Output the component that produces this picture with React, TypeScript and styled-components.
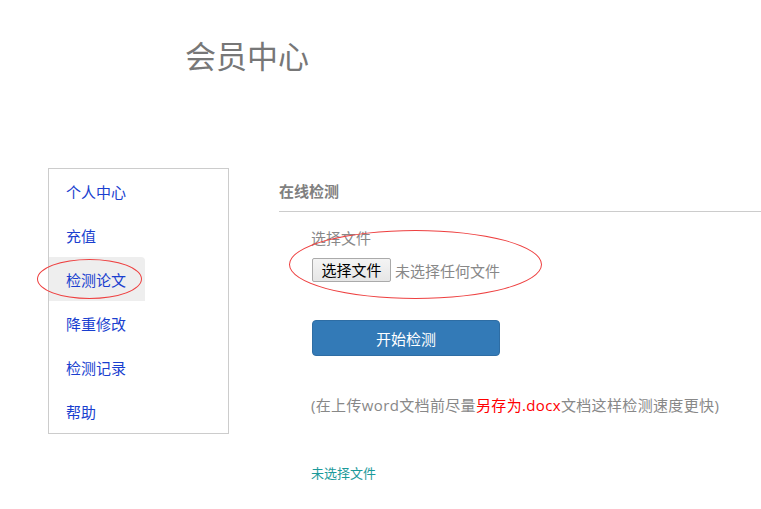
import styled, { createGlobalStyle } from 'styled-components';

const GlobalStyle = createGlobalStyle`
  html, body {
    margin: 0;
    padding: 0;
    background: #fff;
    overflow: hidden;
  }
  body {
    font-family: 'Open Sans', 'Noto Sans CJK SC', sans-serif;
  }
`;

const Page = styled.div`
  width: 761px;
  height: 509px;
  overflow: hidden;
`;
const Title = styled.h1`
  margin: 0;
  padding: 36px 0 0 185px;
  font-size: 31px;
  line-height: 40px;
  font-weight: normal;
  color: #777;
`;
const Main = styled.div`
  display: flex;
  margin-top: 92px;
  padding-left: 48px;
  gap: 50px;
`;
const Sidebar = styled.ul`
  list-style: none;
  margin: 0;
  padding: 0;
  width: 179px;
  height: 264px;
  border: 1px solid #ccc;
  flex-shrink: 0;
`;
const NavItem = styled.li<{ $active?: boolean }>`
  position: relative;
  height: 44px;
  width: ${(p) => (p.$active ? '96px' : 'auto')};
  display: flex;
  align-items: center;
  padding-left: 17px;
  box-sizing: border-box;
  font-size: 15px;
  color: #1a3fcf;
  background: ${(p) => (p.$active ? '#eee' : 'transparent')};
  border-top-right-radius: ${(p) => (p.$active ? '4px' : '0')};
`;
const Ring = styled.span<{ $w: number; $h: number; $l: number; $t: number }>`
  position: absolute;
  left: ${(p) => p.$l}px;
  top: ${(p) => p.$t}px;
  width: ${(p) => p.$w}px;
  height: ${(p) => p.$h}px;
  border: 1px solid #ee4040;
  border-radius: 50%;
  box-sizing: border-box;
  pointer-events: none;
`;
const Content = styled.div`
  flex: 1;
  padding-top: 13px;
`;
const Heading = styled.div`
  font-size: 15px;
  line-height: 20px;
  font-weight: bold;
  color: #808080;
  padding-bottom: 10px;
  border-bottom: 1px solid #ccc;
`;
const Form = styled.div`
  padding-left: 32px;
  display: flex;
  flex-direction: column;
  align-items: flex-start;
`;
const Label = styled.div`
  margin-top: 16px;
  font-size: 15px;
  line-height: 20px;
  color: #888;
`;
const FileRow = styled.div`
  position: relative;
  margin-top: 10px;
  display: flex;
  align-items: center;
  gap: 4px;
  height: 24px;
`;
const FileButton = styled.button`
  width: 79px;
  height: 24px;
  margin-left: 1px;
  padding: 0;
  font-family: inherit;
  font-size: 15px;
  line-height: 20px;
  color: #000;
  background: linear-gradient(#f4f4f4, #e6e6e6);
  border: 1px solid #aaa;
  border-radius: 2px;
`;
const FileText = styled.span`
  font-size: 15px;
  color: #888;
`;
const StartButton = styled.button`
  margin-top: 38px;
  margin-left: 1px;
  width: 188px;
  height: 36px;
  font-family: inherit;
  font-size: 15px;
  color: #fff;
  background: #337ab7;
  border: 1px solid #2e6da4;
  border-radius: 4px;
`;
const Note = styled.p`
  margin: 39px 0 0;
  font-size: 15px;
  line-height: 20px;
  letter-spacing: 0.35px;
  color: #888;
`;
const Red = styled.span`
  color: #f00;
`;
const Status = styled.div`
  margin-top: 49px;
  font-size: 13px;
  line-height: 18px;
  color: #1b9a9a;
`;

const items = ['个人中心', '充值', '检测论文', '降重修改', '检测记录', '帮助'];

export default function App() {
  return (
    <Page>
      <GlobalStyle />
      <Title>会员中心</Title>
      <Main>
        <Sidebar>
          {items.map((item) => (
            <NavItem key={item} $active={item === '检测论文'}>
              {item}
              {item === '检测论文' && <Ring $l={-12} $t={2} $w={105} $h={40} />}
            </NavItem>
          ))}
        </Sidebar>
        <Content>
          <Heading>在线检测</Heading>
          <Form>
            <Label>选择文件</Label>
            <FileRow>
              <FileButton>选择文件</FileButton>
              <FileText>未选择任何文件</FileText>
              <Ring $l={-22} $t={-28} $w={253} $h={69} />
            </FileRow>
            <StartButton>开始检测</StartButton>
            <Note>
              (在上传word文档前尽量<Red>另存为.docx</Red>文档这样检测速度更快)
            </Note>
            <Status>未选择文件</Status>
          </Form>
        </Content>
      </Main>
    </Page>
  );
}
